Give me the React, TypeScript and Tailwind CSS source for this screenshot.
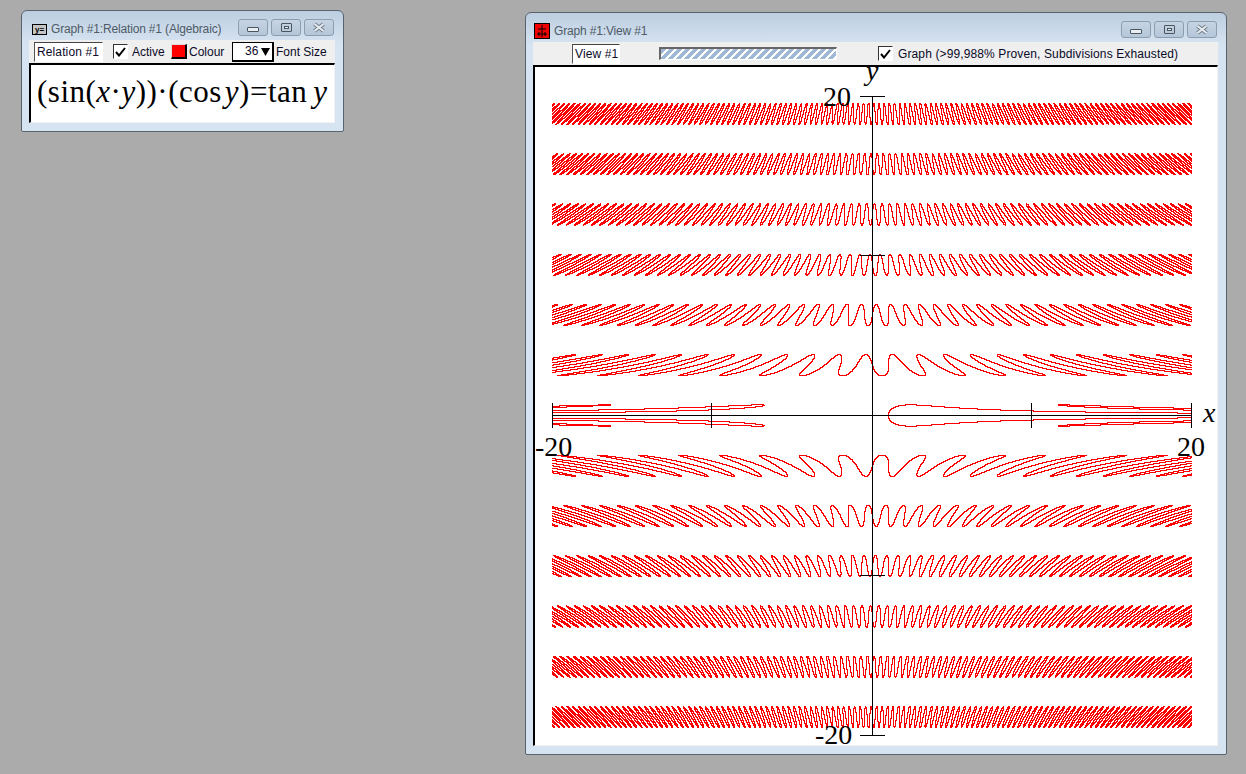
import React from 'react';

const UNIT = 16;
const CENTER_X = 872.5;
const CENTER_Y = 415.5;
const SAMPLES = 4;

// sin(xy)cos(y) = tan(y), multiplied through by cos(y) so there are no poles
const relation = (x: number, y: number) => Math.sin(x * y) * Math.cos(y) * Math.cos(y) - Math.sin(y);

function pixelHasRoot(px: number, py: number) {
    let low = Infinity;
    let high = -Infinity;
    for (let i = 0; i <= SAMPLES; i++) {
        const y = (CENTER_Y - py - i / SAMPLES) / UNIT;
        for (let j = 0; j <= SAMPLES; j++) {
            const v = relation((px + j / SAMPLES - CENTER_X) / UNIT, y);
            if (v < low) low = v;
            if (v > high) high = v;
            if (low <= 0 && high >= 0) return true;
        }
    }
    return false;
}

function buildCurvePath() {
    let d = '';
    for (let py = 96; py < 736; py++) {
        let runStart = -1;
        for (let px = 552; px <= 1192; px++) {
            const hit = px < 1192 && pixelHasRoot(px, py);
            if (hit && runStart < 0) runStart = px;
            if (!hit && runStart >= 0) {
                d += `M${runStart} ${py}h${px - runStart}v1h${runStart - px}z`;
                runStart = -1;
            }
        }
    }
    return d;
}

const curvePath = buildCurvePath();

function TitleButtons() {
    const btn = 'w-[30px] h-[17px] rounded-[3px] border border-[#8c9db0] bg-gradient-to-b from-[#c6d4e3] to-[#b4c6d9] flex items-center justify-center';
    return (
        <div className="flex gap-[3px]">
            <div className={btn}>
                <div className="w-[12px] h-[5px] mt-[3px] rounded-[1px] border border-[#4a5560] bg-[#e8eef4]"></div>
            </div>
            <div className={btn}>
                <div className="w-[11px] h-[9px] rounded-[1px] border border-[#4a5560] flex items-center justify-center">
                    <div className="w-[5px] h-[3px] border border-[#4a5560] bg-[#e8eef4]"></div>
                </div>
            </div>
            <div className={btn}>
                <svg width="14" height="11" viewBox="0 0 14 11">
                    <path d="M2.5 2L11.5 9M11.5 2L2.5 9" stroke="#6f7b87" strokeWidth="4" />
                    <path d="M2.5 2L11.5 9M11.5 2L2.5 9" stroke="#e8edf2" strokeWidth="2" />
                </svg>
            </div>
        </div>
    );
}

function Window({ className, icon, title, children }: { className: string; icon: React.ReactNode; title: string; children: React.ReactNode }) {
    return (
        <div className={`absolute flex flex-col rounded-t-[6px] rounded-b-[2px] border border-[#59636d] bg-[#d6e3f1] bg-gradient-to-b from-[#bccee0] to-[#d6e3f1] to-[32px] pl-[7px] pr-[8px] pb-[8px] ${className}`}>
            <div className="flex items-center h-[29px] shrink-0 pt-[7px]">
                {icon}
                <span className="text-[12px] text-[#4f5b67] ml-[4px] flex-1 leading-none tracking-[-0.16px]">{title}</span>
                <div className="mr-[1px] -mt-[3px]">
                    <TitleButtons />
                </div>
            </div>
            {children}
        </div>
    );
}

function CheckBox() {
    return (
        <div className="w-[15px] h-[15px] border border-[#333] border-r-white border-b-white bg-white flex items-center justify-center shrink-0">
            <svg width="11" height="10" viewBox="0 0 11 10">
                <path d="M1 5L4 8.5L10 1" fill="none" stroke="#000" strokeWidth="2" />
            </svg>
        </div>
    );
}

function NameField({ text, className }: { text: string; className: string }) {
    return (
        <div className={`h-[20px] border border-[#555] border-r-white border-b-white border-t-[#444] bg-white text-[12px] leading-[19px] pl-[2px] text-[#0a0a28] shrink-0 tracking-[0.12px] ${className}`}>
            {text}
        </div>
    );
}

function RelationWindow() {
    return (
        <Window
            className="left-[21px] top-[10px] w-[323px] h-[122px]"
            title="Graph #1:Relation #1 (Algebraic)"
            icon={
                <div className="ml-[3px] w-[15px] h-[11px] border border-black bg-[#c4c4c4] text-[8px] leading-[9px] text-center font-bold text-black">y=</div>
            }
        >
            <div className="flex items-center h-[23px] bg-[#efefef] text-[12px] text-[#0a0a28] shrink-0 pl-[5px]">
                <NameField text="Relation #1" className="w-[69px]" />
                <div className="ml-[10px]"><CheckBox /></div>
                <span className="ml-[4px] w-[34px]">Active</span>
                <div className="ml-[5px] w-[16px] h-[15px] bg-[#ff0000] border-r-2 border-b-2 border-black border-t border-l border-t-[#ddd] border-l-[#ddd] shrink-0"></div>
                <span className="ml-[2px] w-[37px] whitespace-nowrap">Colour</span>
                <div className="ml-[6px] w-[42px] h-[20px] border border-black border-r-2 border-b-2 bg-white flex items-center shrink-0">
                    <span className="ml-[12px] leading-none">36</span>
                    <svg className="ml-[3px]" width="9" height="9" viewBox="0 0 9 9"><path d="M0 1H9L4.5 9Z" fill="#000" /></svg>
                </div>
                <span className="ml-[2px] whitespace-nowrap">Font Size</span>
            </div>
            <div className="flex-1 border-t-2 border-l-2 border-black border-r border-b border-r-[#f2f2f2] border-b-[#f2f2f2] bg-white overflow-hidden">
                <div className="font-['Liberation_Serif',serif] text-[31px] leading-[53px] tracking-[0.5px] text-black whitespace-nowrap pl-[6px]">
                    (sin(<i>x</i>·<i>y</i>))·(cos<i className="ml-[3px]">y</i>)=tan<i className="ml-[6px]">y</i>
                </div>
            </div>
        </Window>
    );
}

function Plot() {
    const serif = 'font-["Liberation_Serif",serif]';
    return (
        <svg className="block w-full h-full" viewBox="535 67 682 678">
            <path d={curvePath} fill="#ff0000" shapeRendering="crispEdges" />
            <g fill="#000" shapeRendering="crispEdges">
                <rect x="552" y="415" width="640" height="1" />
                <rect x="872" y="96" width="1" height="640" />
                <rect x="552" y="403" width="1" height="25" />
                <rect x="711" y="403" width="1" height="25" />
                <rect x="1031" y="403" width="1" height="25" />
                <rect x="1191" y="403" width="1" height="25" />
                <rect x="860" y="96" width="25" height="1" />
                <rect x="860" y="255" width="25" height="1" />
                <rect x="860" y="575" width="25" height="1" />
                <rect x="860" y="735" width="25" height="1" />
            </g>
            <g className={serif} fontSize="28" fill="#000">
                <text x="823" y="106">20</text>
                <text x="535" y="456">-20</text>
                <text x="1177" y="456">20</text>
                <text x="815" y="744">-20</text>
                <text x="866" y="80" fontStyle="italic">y</text>
                <text x="1203" y="422" fontStyle="italic">x</text>
            </g>
        </svg>
    );
}

function ViewWindow() {
    return (
        <Window
            className="left-[525px] top-[12px] w-[702px] h-[743px]"
            title="Graph #1:View #1"
            icon={
                <div className="ml-[1px] w-[16px] h-[16px] border border-black bg-[#e02020] flex items-center justify-center">
                    <svg width="14" height="14" viewBox="0 0 14 14">
                        <rect width="14" height="14" fill="#f00000" />
                        <path d="M7 1V13M2 10H12M4 8V12M10 8V12M3 5H11" stroke="#000" strokeWidth="1" fill="none" />
                    </svg>
                </div>
            }
        >
            <div className="flex items-center h-[23px] bg-[#efefef] text-[12px] text-[#0a0a28] shrink-0 pl-[39px]">
                <NameField text="View #1" className="w-[48px]" />
                <div className="ml-[39px] w-[178px] h-[13px] border-t-2 border-l-2 border-[#666] border-r border-b border-r-white border-b-white bg-[repeating-linear-gradient(135deg,#9fb8d3_0px,#9fb8d3_3.6px,#ffffff_3.6px,#ffffff_5.66px)] shrink-0"></div>
                <div className="ml-[41px]"><CheckBox /></div>
                <span className="ml-[5px] whitespace-nowrap tracking-[0.12px]">Graph (&gt;99,988% Proven, Subdivisions Exhausted)</span>
            </div>
            <div className="flex-1 min-h-0 border-t-2 border-l-2 border-black border-r border-b border-r-[#f2f2f2] border-b-[#f2f2f2] bg-white overflow-hidden">
                <Plot />
            </div>
        </Window>
    );
}

export default function App() {
    return (
        <div className="relative w-[1246px] h-[774px] overflow-hidden bg-[#ababab] font-['Liberation_Sans',Arial,sans-serif]">
            <RelationWindow />
            <ViewWindow />
        </div>
    );
}
